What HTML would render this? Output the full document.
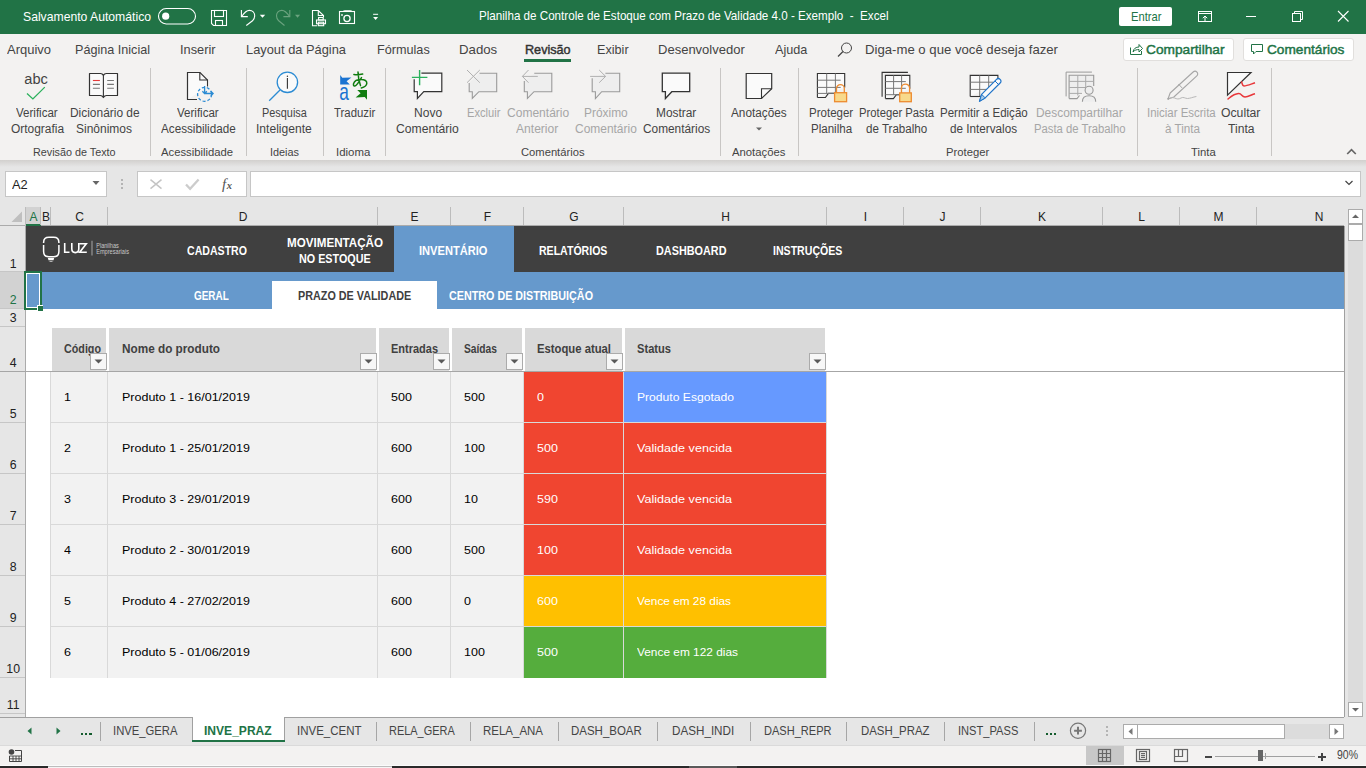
<!DOCTYPE html>
<html><head><meta charset="utf-8"><title>Excel</title>
<style>
html,body{margin:0;padding:0;width:1366px;height:768px;overflow:hidden;background:#f3f2f1;}
body{position:relative;font-family:"Liberation Sans",sans-serif;}
body>div{position:absolute;}
.t{position:absolute;white-space:nowrap;line-height:1;transform-origin:0 0;}
</style></head><body>
<div style="left:0px;top:0px;width:1366px;height:34px;background:#217346;"></div>
<div class="t" style="left:23px;top:10.00px;font-size:13px;color:#fff;transform:scaleX(0.9372);">Salvamento Automático</div>
<svg style="position:absolute;left:156px;top:6px;" width="42" height="22" viewBox="0 0 42 22"><rect x="2.5" y="2.5" width="37" height="15.5" rx="7.75" fill="none" stroke="#fff" stroke-width="1.1"/><circle cx="9.7" cy="10.2" r="3.6" fill="#fff"/></svg>
<svg style="position:absolute;left:209px;top:8px;" width="20" height="20" viewBox="0 0 20 20"><path d="M2.5 2.5H17.5V17.5H4.5L2.5 15.5Z" fill="none" stroke="#fff" stroke-width="1.1"/><rect x="5.5" y="2.5" width="9" height="6" fill="none" stroke="#fff" stroke-width="1.1"/><rect x="6.5" y="12.5" width="7" height="5" fill="none" stroke="#fff" stroke-width="1.1"/></svg>
<svg style="position:absolute;left:238px;top:8px;" width="30" height="20" viewBox="0 0 30 20"><path d="M3.4 1.9V8.6H9.8" fill="none" stroke="#fff" stroke-width="1.1"/><path d="M3.8 8.2C6 5 8.5 2.4 11.3 2.4C14.5 2.4 16.7 4.8 16.7 7.8C16.7 10 15.8 11.5 14.5 12.8L8.3 17.5" fill="none" stroke="#fff" stroke-width="1.1"/><path d="M21.8 6.8H27.2L24.5 9.8Z" fill="#fff"/></svg>
<svg style="position:absolute;left:273px;top:8px;" width="30" height="20" viewBox="0 0 30 20"><path d="M16.8 1.9V8.6H10.4" fill="none" stroke="#6ba37f" stroke-width="1.1"/><path d="M16.4 8.2C14.2 5 11.7 2.4 8.9 2.4C5.7 2.4 3.5 4.8 3.5 7.8C3.5 10 4.4 11.5 5.7 12.8L11.5 17.5" fill="none" stroke="#6ba37f" stroke-width="1.1"/><path d="M22 6.8H27.1L24.55 9.8Z" fill="#6ba37f"/></svg>
<svg style="position:absolute;left:306px;top:6px;" width="80" height="24" viewBox="0 0 80 24"><g fill="none" stroke="#fff" stroke-width="1.1"><path d="M11 19.7H6.5V4.5H12.3L17.5 9.5V11"/><path d="M12.3 4.5V9.5H17.5"/><rect x="12.6" y="11.5" width="4.6" height="2.5"/><rect x="10.5" y="14" width="9" height="3.7"/><rect x="12.3" y="16.2" width="5.4" height="3.5"/><rect x="33.5" y="5.5" width="15" height="12"/><path d="M37.4 5.5Q37.6 4.8 39 4.8H44.3Q45.5 4.8 45.7 5.5"/><circle cx="41" cy="12.5" r="3.1" stroke-width="1.3"/></g><rect x="35.2" y="8.2" width="1.6" height="1.6" fill="#fff"/><path d="M67.1 8.3H72.1" stroke="#fff" stroke-width="1"/><path d="M67.1 11.1H72.1L69.6 14Z" fill="#fff"/></svg>
<div class="t" style="left:479.4px;top:9.00px;font-size:13px;color:#fff;transform:scaleX(0.8943);">Planilha de Controle de Estoque com Prazo de Validade 4.0 - Exemplo&nbsp;&nbsp;-&nbsp;&nbsp;Excel</div>
<div style="left:1119px;top:7px;width:53px;height:19px;background:#fff;border-radius:2px;"></div>
<div class="t" style="left:1130.6px;top:10.00px;font-size:13px;color:#217346;transform:scaleX(0.8587);">Entrar</div>
<svg style="position:absolute;left:1196px;top:9px;" width="18" height="15" viewBox="0 0 18 15"><rect x="2.5" y="2.5" width="13" height="10" fill="none" stroke="#fff"/><path d="M2.5 4.5H15.5" stroke="#fff"/><path d="M9 12V7M6.8 9.2L9 7L11.2 9.2" fill="none" stroke="#fff"/></svg>
<div style="left:1246px;top:16px;width:10px;height:1px;background:#fff;"></div>
<svg style="position:absolute;left:1290px;top:9px;" width="15" height="15" viewBox="0 0 15 15"><rect x="2.5" y="4.5" width="8" height="8" fill="none" stroke="#fff"/><path d="M4.5 4.5V2.5H12.5V10.5H10.5" fill="none" stroke="#fff"/></svg>
<svg style="position:absolute;left:1336px;top:9px;" width="15" height="15" viewBox="0 0 15 15"><path d="M2 2L12.5 12.5M12.5 2L2 12.5" stroke="#fff" stroke-width="1.1"/></svg>
<div style="left:0px;top:34px;width:1366px;height:126px;background:#f3f2f1;"></div>
<div class="t" style="left:7px;top:43.00px;font-size:13px;color:#444;transform:scaleX(0.9982);">Arquivo</div>
<div class="t" style="left:75px;top:43.00px;font-size:13px;color:#444;transform:scaleX(0.9699);">Página Inicial</div>
<div class="t" style="left:180px;top:43.00px;font-size:13px;color:#444;transform:scaleX(0.9828);">Inserir</div>
<div class="t" style="left:246px;top:43.00px;font-size:13px;color:#444;transform:scaleX(0.9882);">Layout da Página</div>
<div class="t" style="left:377px;top:43.00px;font-size:13px;color:#444;transform:scaleX(0.9727);">Fórmulas</div>
<div class="t" style="left:458.8px;top:43.00px;font-size:13px;color:#444;transform:scaleX(1.0165);">Dados</div>
<div class="t" style="left:597.2px;top:43.00px;font-size:13px;color:#444;transform:scaleX(0.9721);">Exibir</div>
<div class="t" style="left:658px;top:43.00px;font-size:13px;color:#444;transform:scaleX(1.0009);">Desenvolvedor</div>
<div class="t" style="left:775px;top:43.00px;font-size:13px;color:#444;transform:scaleX(0.9714);">Ajuda</div>
<div class="t" style="left:524.5px;top:43.00px;font-size:13px;color:#333;transform:scaleX(0.9709);-webkit-text-stroke:0.45px #333;">Revisão</div>
<div style="left:524px;top:59px;width:47px;height:3px;background:#217346;"></div>
<svg style="position:absolute;left:836px;top:41px;" width="18" height="18" viewBox="0 0 18 18"><circle cx="10.5" cy="7" r="5" fill="none" stroke="#444" stroke-width="1"/><path d="M7 10.5L2 15.5" stroke="#444" stroke-width="1.2"/></svg>
<div class="t" style="left:864.5px;top:43.00px;font-size:13px;color:#444;transform:scaleX(1.0117);">Diga-me o que você deseja fazer</div>
<div style="left:1123px;top:38px;width:111px;height:23px;background:#fff;box-sizing:border-box;border:1px solid #e1dfdd;border-radius:3px;"></div>
<svg style="position:absolute;left:1128px;top:41px;" width="16" height="16" viewBox="0 0 16 16"><path d="M2.5 6.5V13.5H13.5V10" fill="none" stroke="#217346"/><path d="M5 11C5.5 7.5 8 6 11 6V3.5L14.5 7.5L11 11V8.5C9 8.5 6.5 9 5 11Z" fill="none" stroke="#217346" stroke-linejoin="round"/></svg>
<div class="t" style="left:1145.8px;top:43.00px;font-size:13px;color:#217346;transform:scaleX(1.0549);-webkit-text-stroke:0.45px #217346;">Compartilhar</div>
<div style="left:1243px;top:38px;width:111px;height:23px;background:#fff;box-sizing:border-box;border:1px solid #e1dfdd;border-radius:3px;"></div>
<svg style="position:absolute;left:1249px;top:41px;" width="16" height="16" viewBox="0 0 16 16"><path d="M2.5 3.5H13.5V10.5H7L4.5 13V10.5H2.5Z" fill="none" stroke="#217346" stroke-linejoin="round"/></svg>
<div class="t" style="left:1266.6px;top:43.00px;font-size:13px;color:#217346;transform:scaleX(1.0502);-webkit-text-stroke:0.45px #217346;">Comentários</div>
<div class="t" style="left:16.3px;top:106.84px;font-size:12px;color:#444;transform:scaleX(0.9619);">Verificar</div>
<div class="t" style="left:10.7px;top:122.84px;font-size:12px;color:#444;transform:scaleX(0.9952);">Ortografia</div>
<div class="t" style="left:69.7px;top:106.84px;font-size:12px;color:#444;transform:scaleX(0.9937);">Dicionário de</div>
<div class="t" style="left:76.2px;top:122.84px;font-size:12px;color:#444;transform:scaleX(0.9995);">Sinônimos</div>
<div class="t" style="left:32.6px;top:146.69px;font-size:11px;color:#444;transform:scaleX(0.9812);">Revisão de Texto</div>
<div class="t" style="left:177.2px;top:106.84px;font-size:12px;color:#444;transform:scaleX(0.9619);">Verificar</div>
<div class="t" style="left:160.5px;top:122.84px;font-size:12px;color:#444;transform:scaleX(0.9737);">Acessibilidade</div>
<div class="t" style="left:161.4px;top:146.69px;font-size:11px;color:#444;transform:scaleX(1.0253);">Acessibilidade</div>
<div class="t" style="left:261.6px;top:106.84px;font-size:12px;color:#444;transform:scaleX(0.9075);">Pesquisa</div>
<div class="t" style="left:256.3px;top:122.84px;font-size:12px;color:#444;transform:scaleX(1.0058);">Inteligente</div>
<div class="t" style="left:269.5px;top:146.69px;font-size:11px;color:#444;transform:scaleX(0.9880);">Ideias</div>
<div class="t" style="left:333.7px;top:106.84px;font-size:12px;color:#444;transform:scaleX(0.9480);">Traduzir</div>
<div class="t" style="left:336.3px;top:146.69px;font-size:11px;color:#444;transform:scaleX(1.0389);">Idioma</div>
<div class="t" style="left:413.6px;top:106.84px;font-size:12px;color:#444;transform:scaleX(1.0031);">Novo</div>
<div class="t" style="left:396.2px;top:122.84px;font-size:12px;color:#444;transform:scaleX(1.0124);">Comentário</div>
<div class="t" style="left:466.6px;top:106.84px;font-size:12px;color:#a6a6a6;transform:scaleX(0.9276);">Excluir</div>
<div class="t" style="left:506.5px;top:106.84px;font-size:12px;color:#a6a6a6;transform:scaleX(1.0027);">Comentário</div>
<div class="t" style="left:516.4px;top:122.84px;font-size:12px;color:#a6a6a6;transform:scaleX(1.0067);">Anterior</div>
<div class="t" style="left:584px;top:106.84px;font-size:12px;color:#a6a6a6;transform:scaleX(0.9929);">Próximo</div>
<div class="t" style="left:574.6px;top:122.84px;font-size:12px;color:#a6a6a6;transform:scaleX(0.9963);">Comentário</div>
<div class="t" style="left:656.3px;top:106.84px;font-size:12px;color:#444;transform:scaleX(0.9909);">Mostrar</div>
<div class="t" style="left:642.6px;top:122.84px;font-size:12px;color:#444;transform:scaleX(0.9878);">Comentários</div>
<div class="t" style="left:520.6px;top:146.69px;font-size:11px;color:#444;transform:scaleX(1.0183);">Comentários</div>
<div class="t" style="left:731.3px;top:106.84px;font-size:12px;color:#444;transform:scaleX(0.9822);">Anotações</div>
<svg style="position:absolute;left:755px;top:126px;" width="8" height="6" viewBox="0 0 8 6"><path d="M1 1.5h6l-3 3z" fill="#666"/></svg>
<div class="t" style="left:732.1px;top:146.69px;font-size:11px;color:#444;transform:scaleX(1.0273);">Anotações</div>
<div class="t" style="left:808.5px;top:106.84px;font-size:12px;color:#444;transform:scaleX(0.9603);">Proteger</div>
<div class="t" style="left:810.6px;top:122.84px;font-size:12px;color:#444;transform:scaleX(0.9625);">Planilha</div>
<div class="t" style="left:858.5px;top:106.84px;font-size:12px;color:#444;transform:scaleX(0.9382);">Proteger Pasta</div>
<div class="t" style="left:865.6px;top:122.84px;font-size:12px;color:#444;transform:scaleX(0.9656);">de Trabalho</div>
<div class="t" style="left:939.6px;top:106.84px;font-size:12px;color:#444;transform:scaleX(0.9598);">Permitir a Edição</div>
<div class="t" style="left:949.8px;top:122.84px;font-size:12px;color:#444;transform:scaleX(0.9751);">de Intervalos</div>
<div class="t" style="left:1036.3px;top:106.84px;font-size:12px;color:#a6a6a6;transform:scaleX(0.9924);">Descompartilhar</div>
<div class="t" style="left:1033.7px;top:122.84px;font-size:12px;color:#a6a6a6;transform:scaleX(0.9404);">Pasta de Trabalho</div>
<div class="t" style="left:945.5px;top:146.69px;font-size:11px;color:#444;transform:scaleX(1.0239);">Proteger</div>
<div class="t" style="left:1147px;top:106.84px;font-size:12px;color:#a6a6a6;transform:scaleX(0.9539);">Iniciar Escrita</div>
<div class="t" style="left:1164.6px;top:122.84px;font-size:12px;color:#a6a6a6;transform:scaleX(0.9743);">à Tinta</div>
<div class="t" style="left:1221px;top:106.84px;font-size:12px;color:#444;transform:scaleX(1.0187);">Ocultar</div>
<div class="t" style="left:1227.5px;top:122.84px;font-size:12px;color:#444;transform:scaleX(1.0102);">Tinta</div>
<div class="t" style="left:1191px;top:146.69px;font-size:11px;color:#444;transform:scaleX(1.0272);">Tinta</div>
<div style="left:150px;top:68px;width:1px;height:88px;background:#c8c6c4;"></div>
<div style="left:246px;top:68px;width:1px;height:88px;background:#c8c6c4;"></div>
<div style="left:323px;top:68px;width:1px;height:88px;background:#c8c6c4;"></div>
<div style="left:385px;top:68px;width:1px;height:88px;background:#c8c6c4;"></div>
<div style="left:720px;top:68px;width:1px;height:88px;background:#c8c6c4;"></div>
<div style="left:798px;top:68px;width:1px;height:88px;background:#c8c6c4;"></div>
<div style="left:1137px;top:68px;width:1px;height:88px;background:#c8c6c4;"></div>
<div style="left:1271px;top:68px;width:1px;height:88px;background:#c8c6c4;"></div>
<svg style="position:absolute;left:1345px;top:147px;" width="13" height="9" viewBox="0 0 13 9"><path d="M2.2 7L6.5 2.7L10.8 7" fill="none" stroke="#666" stroke-width="1.7"/></svg>
<svg style="position:absolute;left:0px;top:60px;" width="160" height="45" viewBox="0 0 160 45"><text x="24.3" y="24" font-family="Liberation Sans" font-size="15.5" fill="#444" textLength="23.5" lengthAdjust="spacingAndGlyphs">abc</text><path d="M27 33.4L32.9 38.9L44.8 27.1" fill="none" stroke="#2bb15c" stroke-width="1.3"/><path d="M89.5 13.5H100.5Q102.5 13.5 103.4 15.5Q104.3 13.5 106.3 13.5H117.5V35.5H106.5Q104.5 35.5 103.4 37.5Q102.3 35.5 100.3 35.5H89.5Z" fill="#fafafa" stroke="#333" stroke-width="1.2" stroke-linejoin="round"/><path d="M103.4 15.5V37" stroke="#333" stroke-width="1.1"/><path d="M92.9 20.5H99.9" stroke="#e43b3b" stroke-width="1.1"/><path d="M92.9 24.4H99.9M92.9 28.3H99.9M107.2 20.5H113.9M107.2 24.4H113.9M107.2 28.3H113.9" stroke="#777" stroke-width="1.1"/></svg>
<svg style="position:absolute;left:180px;top:66px;" width="40" height="40" viewBox="0 0 40 40"><path d="M7.5 33.5V6.5H20L27.5 14V20.5" fill="#fafafa" stroke="#333" stroke-width="1.1"/><path d="M7.5 6.5V33.5H17" fill="none" stroke="#333" stroke-width="1.1"/><path d="M19.8 6.5V14H27.5" fill="none" stroke="#333" stroke-width="1.1"/><circle cx="24.6" cy="28.3" r="7" fill="none" stroke="#2b8bd3" stroke-width="1.3" stroke-dasharray="3 2"/><path d="M24.6 20V27.5M22.4 25.3L24.6 27.6L26.8 25.3M24.6 27.5H33M30.8 25.3L33.1 27.5L30.8 29.7" fill="none" stroke="#2b8bd3" stroke-width="1.3"/></svg>
<svg style="position:absolute;left:260px;top:66px;" width="40" height="40" viewBox="0 0 40 40"><circle cx="27.4" cy="16.3" r="10.2" fill="#fafafa" stroke="#2b8bd3" stroke-width="1.3"/><path d="M20 24L9.2 34.7" stroke="#2b8bd3" stroke-width="1.3"/><path d="M27.4 12V22.8" stroke="#333" stroke-width="1.1"/><circle cx="27.4" cy="10.2" r="0.7" fill="#333"/></svg>
<svg style="position:absolute;left:336px;top:70px;" width="34" height="34" viewBox="0 0 34 34"><path d="M4.2 5L6.3 7.7L15.4 7.5L10.6 11.3L13.8 14.6H4.2Z" fill="#1a73d1"/><text x="0" y="0" transform="translate(3.3 29.8) scale(0.72 1)" font-family="Liberation Sans" font-size="24" fill="#1a73d1">a</text><path d="M17.9 4.6Q22 5.2 26.7 4.1M22 2Q22.3 10 24.5 15.6M25.5 7.6Q21 15.5 18.8 16Q17 16.3 17.6 13.5Q19 9.6 25 9.6Q30.9 9.6 30.8 13.2Q30.6 16.6 25.3 17.9" fill="none" stroke="#107c10" stroke-width="1.5" stroke-linecap="round"/><path d="M21.25 20H31V29.8L28.75 27.1L19.6 27.5L24.6 23.3Z" fill="#107c10"/></svg>
<svg style="position:absolute;left:405px;top:66px;" width="40" height="40" viewBox="0 0 40 40"><path d="M9.2 13.2V25.7H12.4V32.5L18.8 25.7H36.8V7.2H16.4" fill="#fafafa" stroke="#333" stroke-width="1.2"/><path d="M14.6 4V19.2M6.9 11.4H22.4" stroke="#2bb15c" stroke-width="1.4"/></svg>
<svg style="position:absolute;left:460px;top:66px;" width="40" height="40" viewBox="0 0 40 40"><path d="M9.2 17.1V25.7H12.3V32.5L18.9 25.7H36.7V7.2H19.5" fill="#eeeeee" stroke="#9a9a9a" stroke-width="1.1"/><path d="M7 4L19.8 16.7M19.8 4L7 16.7" stroke="#b0b0b0" stroke-width="1"/></svg>
<svg style="position:absolute;left:520px;top:66px;" width="40" height="40" viewBox="0 0 40 40"><path d="M4.3 15.1V25.7H7.4V32.5L14 25.7H31.8V7.2H14.3" fill="#eeeeee" stroke="#9a9a9a" stroke-width="1.1"/><path d="M2.4 10.4H17.8M8.5 4L2.4 10.4L8.5 16.7" fill="none" stroke="#b0b0b0" stroke-width="1"/></svg>
<svg style="position:absolute;left:585px;top:66px;" width="40" height="40" viewBox="0 0 40 40"><path d="M7.2 12.3V25.7H10.4V32.5L16.7 25.7H34.7V7.2H20.4" fill="#eeeeee" stroke="#9a9a9a" stroke-width="1.1"/><path d="M5.1 10.4H20.6M14.2 4L20.6 10.4L14.2 16.7" fill="none" stroke="#b0b0b0" stroke-width="1"/></svg>
<svg style="position:absolute;left:655px;top:66px;" width="40" height="40" viewBox="0 0 40 40"><path d="M7.3 7.2H34.7V25.7H16.8L10.4 32.5V25.7H7.3Z" fill="#fafafa" stroke="#333" stroke-width="1.3" stroke-linejoin="miter"/></svg>
<svg style="position:absolute;left:740px;top:66px;" width="40" height="40" viewBox="0 0 40 40"><path d="M6.2 7.5H31.7V22.7L21.5 32.5H6.2Z" fill="#fafafa" stroke="#333" stroke-width="1.2"/><path d="M21.5 32.5V22.7H31.7" fill="none" stroke="#333" stroke-width="1.1"/></svg>
<svg style="position:absolute;left:800px;top:66px;" width="60" height="40" viewBox="0 0 60 40"><path d="M17.4 31.5V7.5H44.7V21.4" fill="#fafafa" stroke="#333" stroke-width="1.1"/><path d="M17.4 31.5H25.4L28.4 27.4H38.7" fill="none" stroke="#333" stroke-width="1.1"/><path d="M26.7 7.5V27.4" stroke="#777" stroke-width="1"/><path d="M35.4 7.5V27.4" stroke="#777" stroke-width="1"/><path d="M17.4 14.2H40.7" stroke="#777" stroke-width="1"/><path d="M17.4 21.4H40.7" stroke="#777" stroke-width="1"/><path d="M17.4 27.4H40.7" stroke="#777" stroke-width="1"/><path d="M36.5 26.7V22.5A3.8999999999999986 3.8999999999999986 0 0 1 44.3 22.5V26.7" fill="none" stroke="#ed8b30" stroke-width="1.3"/><rect x="34.6" y="26.7" width="12" height="9" fill="#f8d98b" stroke="#ed8b30" stroke-width="1.3"/></svg>
<svg style="position:absolute;left:870px;top:66px;" width="60" height="40" viewBox="0 0 60 40"><path d="M12.1 30.7V6.4H37.9" fill="none" stroke="#333" stroke-width="1.1"/><path d="M15.4 32.6V9.4H39.8V22.7" fill="#fafafa" stroke="#333" stroke-width="1.1"/><path d="M15.4 32.6H23.4L26.4 28.7H33.8" fill="none" stroke="#333" stroke-width="1.1"/><path d="M23.6 9.4V28.7" stroke="#777" stroke-width="1"/><path d="M31.6 9.4V28.7" stroke="#777" stroke-width="1"/><path d="M15.4 15.6H35.8" stroke="#777" stroke-width="1"/><path d="M15.4 22.3H35.8" stroke="#777" stroke-width="1"/><path d="M15.4 28.7H35.8" stroke="#777" stroke-width="1"/><path d="M31.4 26.9V22.2A4.100000000000001 4.100000000000001 0 0 1 39.6 22.2V26.9" fill="none" stroke="#ed8b30" stroke-width="1.3"/><rect x="29.7" y="26.9" width="11.6" height="8.8" fill="#f8d98b" stroke="#ed8b30" stroke-width="1.3"/></svg>
<svg style="position:absolute;left:960px;top:66px;" width="50" height="40" viewBox="0 0 50 40"><path d="M10.2 30.5V9.4H37.9V16" fill="#fafafa" stroke="#333" stroke-width="1.1"/><path d="M10.2 30.5H23" fill="none" stroke="#333" stroke-width="1.1"/><path d="M19.7 9.4V30M28.7 9.4V25M10.2 16.2H33M10.2 23.4H27" stroke="#777" stroke-width="1"/><path d="M19.5 35.3L21.6 28.3L36.5 13.4Q38.3 11.6 40.1 13.4Q41.9 15.2 40.1 17L25.2 31.9Z" fill="#fafafa" stroke="#1e73c8" stroke-width="1.2" stroke-linejoin="round"/><path d="M19.5 35.3L21.6 28.3L25.2 31.9Z" fill="#a7cbea" stroke="#1e73c8" stroke-width="1"/><path d="M35 15L38.5 18.5" stroke="#1e73c8" stroke-width="1"/></svg>
<svg style="position:absolute;left:1060px;top:66px;" width="40" height="40" viewBox="0 0 40 40"><path d="M6.1 30.4V6.1H31.9" fill="none" stroke="#999" stroke-width="1"/><path d="M9.1 32.6V9.2H33.7V20" fill="#eeeeee" stroke="#999" stroke-width="1.1"/><path d="M9.1 32.6H17L19.5 29.5" fill="none" stroke="#999" stroke-width="1.1"/><path d="M17.8 9.2V29.5M25.7 9.2V22M9.1 15.4H33.7M9.1 21.5H26M9.1 27.4H22" stroke="#aaa" stroke-width="1"/><circle cx="29.1" cy="24.3" r="4" fill="#eee" stroke="#999" stroke-width="1.1"/><path d="M22.4 35.7Q22.4 29.8 29.1 29.8Q35.7 29.8 35.7 35.7" fill="#eee" stroke="#999" stroke-width="1.1"/></svg>
<svg style="position:absolute;left:1160px;top:66px;" width="40" height="40" viewBox="0 0 40 40"><path d="M8 33L10.15 27.03L33.15 6.03A2.7 2.7 0 0 1 36.85 9.97L13.85 30.97Z" fill="#f3f2f1" stroke="#a6a6a6" stroke-width="1.1" stroke-linejoin="round"/><path d="M18.45 18.03L22.15 21.97" stroke="#a6a6a6" stroke-width="1"/><path d="M8 33C10 32 12 31 14.5 32C17 33 18.5 33.5 21 32C23.5 30.5 25 32.5 27.5 32.5C30 32.5 33 31 36.4 30.5" fill="none" stroke="#b8b8b8" stroke-width="1"/><circle cx="8.3" cy="32.7" r="1" fill="#a6a6a6"/></svg>
<svg style="position:absolute;left:1220px;top:66px;" width="40" height="40" viewBox="0 0 40 40"><path d="M7.5 6.5H31L7.5 29.2Z" fill="#fafafa" stroke="#333" stroke-width="1.2"/><path d="M21.3 15.6C22.5 17 22 20 24 20C26.5 20 30 18.5 35 16.8M7.5 33.3C10 31.5 13.5 28 18.5 27.6C22 27.4 21.5 31 25 31C28.5 31 31.5 28.5 35 27.7" fill="none" stroke="#e8373a" stroke-width="1.5"/></svg>
<div style="left:0px;top:160px;width:1366px;height:66px;background:#e6e6e6;"></div>
<div style="left:0;top:160px;width:1366px;height:7px;background:linear-gradient(#d2d0ce,#e6e6e6);"></div>
<div style="left:5px;top:171px;width:102px;height:26px;background:#fff;box-sizing:border-box;border:1px solid #c6c6c6;"></div>
<div class="t" style="left:12.3px;top:178.84px;font-size:12px;color:#222;transform:scaleX(1.0696);">A2</div>
<svg style="position:absolute;left:90px;top:178px;" width="12" height="10" viewBox="0 0 12 10"><path d="M2.5 3h7l-3.5 4z" fill="#666"/></svg>
<div style="left:121px;top:179px;width:2px;height:2px;background:#b4b4b4;"></div>
<div style="left:121px;top:183px;width:2px;height:2px;background:#b4b4b4;"></div>
<div style="left:121px;top:187px;width:2px;height:2px;background:#b4b4b4;"></div>
<div style="left:137px;top:171px;width:110px;height:26px;background:#fff;box-sizing:border-box;border:1px solid #c6c6c6;"></div>
<svg style="position:absolute;left:148px;top:177px;" width="16" height="16" viewBox="0 0 16 16"><path d="M2.5 2.7L13.5 11.6M13.5 2.7L2.5 11.6" stroke="#c4c4c4" stroke-width="1.5"/></svg>
<svg style="position:absolute;left:184px;top:177px;" width="17" height="16" viewBox="0 0 17 16"><path d="M2 7.5L6.1 11.8L14.6 2.5" fill="none" stroke="#cccccc" stroke-width="2.3"/></svg>
<svg style="position:absolute;left:218px;top:174px;" width="20" height="20" viewBox="0 0 20 20"><text x="4" y="15" font-family="Liberation Serif" font-style="italic" font-size="15" fill="#555">f</text><text x="8.7" y="14.5" font-family="Liberation Serif" font-style="italic" font-weight="bold" font-size="10.5" fill="#555">x</text></svg>
<div style="left:250px;top:171px;width:1111px;height:26px;background:#fff;box-sizing:border-box;border:1px solid #c6c6c6;"></div>
<svg style="position:absolute;left:1343px;top:178px;" width="12" height="10" viewBox="0 0 12 10"><path d="M2.5 3L6 6.5L9.5 3" fill="none" stroke="#444" stroke-width="1.2"/></svg>
<div style="left:0px;top:225px;width:1344px;height:1px;background:#ababab;"></div>
<svg style="position:absolute;left:10px;top:210px;" width="14" height="14" viewBox="0 0 14 14"><path d="M12 1.5V12H1.5Z" fill="#bfbfbf"/></svg>
<div style="left:26px;top:207px;width:14px;height:18px;background:#d2d2d2;"></div>
<div style="left:25px;top:207px;width:1px;height:19px;background:#bcbcbc;"></div>
<div style="left:26px;top:224px;width:15px;height:2px;background:#217346;"></div>
<div style="left:40px;top:207px;width:1px;height:18px;background:#bcbcbc;"></div>
<div class="t" style="left:29.497812500000002px;top:210.84px;font-size:12px;color:#217346;">A</div>
<div style="left:50px;top:207px;width:1px;height:18px;background:#bcbcbc;"></div>
<div class="t" style="left:41.9978125px;top:210.84px;font-size:12px;color:#222;">B</div>
<div style="left:107px;top:207px;width:1px;height:18px;background:#bcbcbc;"></div>
<div class="t" style="left:75.166875px;top:210.84px;font-size:12px;color:#222;">C</div>
<div style="left:377px;top:207px;width:1px;height:18px;background:#bcbcbc;"></div>
<div class="t" style="left:238.666875px;top:210.84px;font-size:12px;color:#222;">D</div>
<div style="left:450px;top:207px;width:1px;height:18px;background:#bcbcbc;"></div>
<div class="t" style="left:410.4978125px;top:210.84px;font-size:12px;color:#222;">E</div>
<div style="left:523px;top:207px;width:1px;height:18px;background:#bcbcbc;"></div>
<div class="t" style="left:483.83484375px;top:210.84px;font-size:12px;color:#222;">F</div>
<div style="left:623px;top:207px;width:1px;height:18px;background:#bcbcbc;"></div>
<div class="t" style="left:569.333125px;top:210.84px;font-size:12px;color:#222;">G</div>
<div style="left:826px;top:207px;width:1px;height:18px;background:#bcbcbc;"></div>
<div class="t" style="left:721.166875px;top:210.84px;font-size:12px;color:#222;">H</div>
<div style="left:903px;top:207px;width:1px;height:18px;background:#bcbcbc;"></div>
<div class="t" style="left:863.833125px;top:210.84px;font-size:12px;color:#222;">I</div>
<div style="left:980px;top:207px;width:1px;height:18px;background:#bcbcbc;"></div>
<div class="t" style="left:939.5px;top:210.84px;font-size:12px;color:#222;">J</div>
<div style="left:1102px;top:207px;width:1px;height:18px;background:#bcbcbc;"></div>
<div class="t" style="left:1037.9978125px;top:210.84px;font-size:12px;color:#222;">K</div>
<div style="left:1179px;top:207px;width:1px;height:18px;background:#bcbcbc;"></div>
<div class="t" style="left:1138.16296875px;top:210.84px;font-size:12px;color:#222;">L</div>
<div style="left:1256px;top:207px;width:1px;height:18px;background:#bcbcbc;"></div>
<div class="t" style="left:1213.50171875px;top:210.84px;font-size:12px;color:#222;">M</div>
<div class="t" style="left:1314.7668749999998px;top:210.84px;font-size:12px;color:#222;">N</div>
<div style="left:0px;top:226px;width:25px;height:491px;background:#e6e6e6;"></div>
<div style="left:0px;top:272px;width:25px;height:37px;background:#d2d2d2;"></div>
<div style="left:25px;top:226px;width:1px;height:491px;background:#ababab;"></div>
<div style="left:0px;top:271px;width:25px;height:1px;background:#c6c6c6;"></div>
<div class="t" style="left:9.662968750000001px;top:257.59px;font-size:12.3px;color:#222;">1</div>
<div style="left:0px;top:308px;width:25px;height:1px;background:#c6c6c6;"></div>
<div class="t" style="left:9.662968750000001px;top:293.59px;font-size:12.3px;color:#217346;">2</div>
<div style="left:0px;top:326px;width:25px;height:1px;background:#c6c6c6;"></div>
<div class="t" style="left:9.662968750000001px;top:311.59px;font-size:12.3px;color:#222;">3</div>
<div style="left:0px;top:371px;width:25px;height:1px;background:#c6c6c6;"></div>
<div class="t" style="left:9.662968750000001px;top:356.59px;font-size:12.3px;color:#222;">4</div>
<div style="left:0px;top:422px;width:25px;height:1px;background:#c6c6c6;"></div>
<div class="t" style="left:9.662968750000001px;top:407.59px;font-size:12.3px;color:#222;">5</div>
<div style="left:0px;top:473px;width:25px;height:1px;background:#c6c6c6;"></div>
<div class="t" style="left:9.662968750000001px;top:458.59px;font-size:12.3px;color:#222;">6</div>
<div style="left:0px;top:524px;width:25px;height:1px;background:#c6c6c6;"></div>
<div class="t" style="left:9.662968750000001px;top:509.59px;font-size:12.3px;color:#222;">7</div>
<div style="left:0px;top:575px;width:25px;height:1px;background:#c6c6c6;"></div>
<div class="t" style="left:9.662968750000001px;top:560.59px;font-size:12.3px;color:#222;">8</div>
<div style="left:0px;top:626px;width:25px;height:1px;background:#c6c6c6;"></div>
<div class="t" style="left:9.662968750000001px;top:611.59px;font-size:12.3px;color:#222;">9</div>
<div style="left:0px;top:677px;width:25px;height:1px;background:#c6c6c6;"></div>
<div class="t" style="left:6.3259375px;top:662.59px;font-size:12.3px;color:#222;">10</div>
<div style="left:0px;top:713px;width:25px;height:1px;background:#c6c6c6;"></div>
<div class="t" style="left:6.77125px;top:698.59px;font-size:12.3px;color:#222;">11</div>
<div style="left:26px;top:226px;width:1318px;height:491px;background:#fff;"></div>
<div style="left:1344px;top:207px;width:22px;height:510px;background:#e6e6e6;"></div>
<div style="left:1348px;top:240px;width:15px;height:477px;background:#dcdcdc;"></div>
<div style="left:1348px;top:209px;width:15px;height:15px;background:#fff;box-sizing:border-box;border:1px solid #ababab;"></div>
<svg style="position:absolute;left:1348px;top:209px;" width="15" height="15" viewBox="0 0 15 15"><path d="M4 9h7l-3.5-3.5z" fill="#666"/></svg>
<div style="left:1348px;top:224px;width:15px;height:17px;background:#fff;box-sizing:border-box;border:1px solid #ababab;"></div>
<div style="left:1348px;top:702px;width:15px;height:15px;background:#fff;box-sizing:border-box;border:1px solid #ababab;"></div>
<svg style="position:absolute;left:1348px;top:702px;" width="15" height="15" viewBox="0 0 15 15"><path d="M4 6h7l-3.5 3.5z" fill="#666"/></svg>
<div style="left:26px;top:226px;width:1318px;height:46px;background:#404040;"></div>
<div style="left:394px;top:226px;width:120px;height:46px;background:#6699cc;"></div>
<div class="t" style="left:187.4px;top:244.84px;font-size:12px;color:#fff;font-weight:bold;transform:scaleX(0.8824);">CADASTRO</div>
<div class="t" style="left:287.3px;top:236.84px;font-size:12px;color:#fff;font-weight:bold;transform:scaleX(0.9686);">MOVIMENTAÇÃO</div>
<div class="t" style="left:299.4px;top:252.84px;font-size:12px;color:#fff;font-weight:bold;transform:scaleX(0.8986);">NO ESTOQUE</div>
<div class="t" style="left:419.3px;top:244.84px;font-size:12px;color:#fff;font-weight:bold;transform:scaleX(0.9243);">INVENTÁRIO</div>
<div class="t" style="left:538.7px;top:244.84px;font-size:12px;color:#fff;font-weight:bold;transform:scaleX(0.8794);">RELATÓRIOS</div>
<div class="t" style="left:655.6px;top:244.84px;font-size:12px;color:#fff;font-weight:bold;transform:scaleX(0.9038);">DASHBOARD</div>
<div class="t" style="left:773.4px;top:244.84px;font-size:12px;color:#fff;font-weight:bold;transform:scaleX(0.8821);">INSTRUÇÕES</div>
<svg style="position:absolute;left:38px;top:232px;" width="100" height="34" viewBox="0 0 100 34"><path d="M5.6 11V10.5C5.6 7.5 7.5 5.3 11 5.3H15.7C19 5.3 20.9 7.5 20.9 10.5V11M5.6 13V19.5C5.6 22.8 7.5 24.8 11 24.8H15.7C19 24.8 20.9 22.8 20.9 19.5V13" fill="none" stroke="#fff" stroke-width="1.5"/><path d="M9.8 26H16.2L15.5 28.3H10.5Z" fill="#fff"/><path d="M10.5 29.2H15.5L13 30Z" fill="#fff"/><path d="M26.7 11.1V20.3H31.5M33.8 11.1V16.8Q33.8 20.6 37.3 20.6Q40.8 20.6 40.8 16.8V11.1M41.7 11.7H48.3L41.7 20.3H48.8" fill="none" stroke="#fff" stroke-width="1.6"/><path d="M54 8.8V23.5" stroke="#8a8a8a" stroke-width="1.4"/><text x="58.2" y="16" font-family="Liberation Sans" font-size="6.3" fill="#c8c8c8" textLength="22.6" lengthAdjust="spacingAndGlyphs">Planilhas</text><text x="58.2" y="22" font-family="Liberation Sans" font-size="6.3" fill="#c8c8c8" textLength="32.8" lengthAdjust="spacingAndGlyphs">Empresariais</text></svg>
<div style="left:26px;top:272px;width:1318px;height:37px;background:#6699cc;"></div>
<div style="left:272px;top:281px;width:165px;height:28px;background:#fff;"></div>
<div class="t" style="left:193.6px;top:289.84px;font-size:12px;color:#fff;font-weight:bold;transform:scaleX(0.8286);">GERAL</div>
<div class="t" style="left:297.6px;top:289.84px;font-size:12px;color:#404040;font-weight:bold;transform:scaleX(0.8999);">PRAZO DE VALIDADE</div>
<div class="t" style="left:448.8px;top:289.84px;font-size:12px;color:#fff;font-weight:bold;transform:scaleX(0.8962);">CENTRO DE DISTRIBUIÇÃO</div>
<div style="left:24px;top:271px;width:18px;height:39px;box-sizing:border-box;border:2px solid #217346;"></div>
<div style="left:26px;top:273px;width:14px;height:35px;box-sizing:border-box;border:1px solid #fff;"></div>
<div style="left:37px;top:305px;width:6px;height:6px;background:#217346;box-sizing:border-box;border:1px solid #fff;"></div>
<div style="left:38px;top:306px;width:5px;height:5px;background:#217346;"></div>
<div style="left:52px;top:328px;width:54px;height:43px;background:#d9d9d9;"></div>
<div class="t" style="left:64.2px;top:343.42px;font-size:12.5px;color:#404040;font-weight:bold;transform:scaleX(0.8596);">Código</div>
<div style="left:109px;top:328px;width:267px;height:43px;background:#d9d9d9;"></div>
<div class="t" style="left:121.5px;top:343.42px;font-size:12.5px;color:#404040;font-weight:bold;transform:scaleX(0.9409);">Nome do produto</div>
<div style="left:379px;top:328px;width:70px;height:43px;background:#d9d9d9;"></div>
<div class="t" style="left:391.25px;top:343.42px;font-size:12.5px;color:#404040;font-weight:bold;transform:scaleX(0.8786);">Entradas</div>
<div style="left:452px;top:328px;width:70px;height:43px;background:#d9d9d9;"></div>
<div class="t" style="left:463.9px;top:343.42px;font-size:12.5px;color:#404040;font-weight:bold;transform:scaleX(0.8188);">Saídas</div>
<div style="left:525px;top:328px;width:97px;height:43px;background:#d9d9d9;"></div>
<div class="t" style="left:537px;top:343.42px;font-size:12.5px;color:#404040;font-weight:bold;transform:scaleX(0.9029);">Estoque atual</div>
<div style="left:625px;top:328px;width:200px;height:43px;background:#d9d9d9;"></div>
<div class="t" style="left:637.2px;top:343.42px;font-size:12.5px;color:#404040;font-weight:bold;transform:scaleX(0.8900);">Status</div>
<div style="left:0px;top:371px;width:1344px;height:1px;background:#a6a6a6;"></div>
<svg style="position:absolute;left:90px;top:353px;" width="17" height="17" viewBox="0 0 17 17"><rect x="0.5" y="0.5" width="16" height="16" fill="#f7f7f7" stroke="#ababab"/><path d="M4.5 6.5h8l-4 4z" fill="#595959"/></svg>
<svg style="position:absolute;left:360px;top:353px;" width="17" height="17" viewBox="0 0 17 17"><rect x="0.5" y="0.5" width="16" height="16" fill="#f7f7f7" stroke="#ababab"/><path d="M4.5 6.5h8l-4 4z" fill="#595959"/></svg>
<svg style="position:absolute;left:433px;top:353px;" width="17" height="17" viewBox="0 0 17 17"><rect x="0.5" y="0.5" width="16" height="16" fill="#f7f7f7" stroke="#ababab"/><path d="M4.5 6.5h8l-4 4z" fill="#595959"/></svg>
<svg style="position:absolute;left:506px;top:353px;" width="17" height="17" viewBox="0 0 17 17"><rect x="0.5" y="0.5" width="16" height="16" fill="#f7f7f7" stroke="#ababab"/><path d="M4.5 6.5h8l-4 4z" fill="#595959"/></svg>
<svg style="position:absolute;left:606px;top:353px;" width="17" height="17" viewBox="0 0 17 17"><rect x="0.5" y="0.5" width="16" height="16" fill="#f7f7f7" stroke="#ababab"/><path d="M4.5 6.5h8l-4 4z" fill="#595959"/></svg>
<svg style="position:absolute;left:809px;top:353px;" width="17" height="17" viewBox="0 0 17 17"><rect x="0.5" y="0.5" width="16" height="16" fill="#f7f7f7" stroke="#ababab"/><path d="M4.5 6.5h8l-4 4z" fill="#595959"/></svg>
<div style="left:51px;top:372px;width:472px;height:306px;background:#f2f2f2;"></div>
<div style="left:524px;top:372px;width:99px;height:51px;background:#f04530;"></div>
<div style="left:624px;top:372px;width:202px;height:51px;background:#6699ff;"></div>
<div class="t" style="left:64px;top:392.27px;font-size:11.5px;color:#000;transform:scaleX(1.0870);">1</div>
<div class="t" style="left:121.5px;top:392.27px;font-size:11.5px;color:#000;transform:scaleX(1.0870);">Produto 1 - 16/01/2019</div>
<div class="t" style="left:391.25px;top:392.27px;font-size:11.5px;color:#000;transform:scaleX(1.0870);">500</div>
<div class="t" style="left:463.9px;top:392.27px;font-size:11.5px;color:#000;transform:scaleX(1.0870);">500</div>
<div class="t" style="left:537px;top:392.27px;font-size:11.5px;color:#fff;transform:scaleX(1.0870);">0</div>
<div class="t" style="left:637px;top:392.27px;font-size:11.5px;color:#fff;transform:scaleX(1.0535);">Produto Esgotado</div>
<div style="left:524px;top:423px;width:99px;height:51px;background:#f04530;"></div>
<div style="left:624px;top:423px;width:202px;height:51px;background:#f04530;"></div>
<div class="t" style="left:64px;top:443.27px;font-size:11.5px;color:#000;transform:scaleX(1.0870);">2</div>
<div class="t" style="left:121.5px;top:443.27px;font-size:11.5px;color:#000;transform:scaleX(1.0870);">Produto 1 - 25/01/2019</div>
<div class="t" style="left:391.25px;top:443.27px;font-size:11.5px;color:#000;transform:scaleX(1.0870);">600</div>
<div class="t" style="left:463.9px;top:443.27px;font-size:11.5px;color:#000;transform:scaleX(1.0870);">100</div>
<div class="t" style="left:537px;top:443.27px;font-size:11.5px;color:#fff;transform:scaleX(1.0870);">500</div>
<div class="t" style="left:637px;top:443.27px;font-size:11.5px;color:#fff;transform:scaleX(1.0952);">Validade vencida</div>
<div style="left:524px;top:474px;width:99px;height:51px;background:#f04530;"></div>
<div style="left:624px;top:474px;width:202px;height:51px;background:#f04530;"></div>
<div class="t" style="left:64px;top:494.27px;font-size:11.5px;color:#000;transform:scaleX(1.0870);">3</div>
<div class="t" style="left:121.5px;top:494.27px;font-size:11.5px;color:#000;transform:scaleX(1.0870);">Produto 3 - 29/01/2019</div>
<div class="t" style="left:391.25px;top:494.27px;font-size:11.5px;color:#000;transform:scaleX(1.0870);">600</div>
<div class="t" style="left:463.9px;top:494.27px;font-size:11.5px;color:#000;transform:scaleX(1.0870);">10</div>
<div class="t" style="left:537px;top:494.27px;font-size:11.5px;color:#fff;transform:scaleX(1.0870);">590</div>
<div class="t" style="left:637px;top:494.27px;font-size:11.5px;color:#fff;transform:scaleX(1.0952);">Validade vencida</div>
<div style="left:524px;top:525px;width:99px;height:51px;background:#f04530;"></div>
<div style="left:624px;top:525px;width:202px;height:51px;background:#f04530;"></div>
<div class="t" style="left:64px;top:545.27px;font-size:11.5px;color:#000;transform:scaleX(1.0870);">4</div>
<div class="t" style="left:121.5px;top:545.27px;font-size:11.5px;color:#000;transform:scaleX(1.0870);">Produto 2 - 30/01/2019</div>
<div class="t" style="left:391.25px;top:545.27px;font-size:11.5px;color:#000;transform:scaleX(1.0870);">600</div>
<div class="t" style="left:463.9px;top:545.27px;font-size:11.5px;color:#000;transform:scaleX(1.0870);">500</div>
<div class="t" style="left:537px;top:545.27px;font-size:11.5px;color:#fff;transform:scaleX(1.0870);">100</div>
<div class="t" style="left:637px;top:545.27px;font-size:11.5px;color:#fff;transform:scaleX(1.0952);">Validade vencida</div>
<div style="left:524px;top:576px;width:99px;height:51px;background:#ffc000;"></div>
<div style="left:624px;top:576px;width:202px;height:51px;background:#ffc000;"></div>
<div class="t" style="left:64px;top:596.27px;font-size:11.5px;color:#000;transform:scaleX(1.0870);">5</div>
<div class="t" style="left:121.5px;top:596.27px;font-size:11.5px;color:#000;transform:scaleX(1.0870);">Produto 4 - 27/02/2019</div>
<div class="t" style="left:391.25px;top:596.27px;font-size:11.5px;color:#000;transform:scaleX(1.0870);">600</div>
<div class="t" style="left:463.9px;top:596.27px;font-size:11.5px;color:#000;transform:scaleX(1.0870);">0</div>
<div class="t" style="left:537px;top:596.27px;font-size:11.5px;color:#fff;transform:scaleX(1.0870);">600</div>
<div class="t" style="left:637px;top:596.27px;font-size:11.5px;color:#fff;transform:scaleX(1.0282);">Vence em 28 dias</div>
<div style="left:524px;top:627px;width:99px;height:51px;background:#55ad3d;"></div>
<div style="left:624px;top:627px;width:202px;height:51px;background:#55ad3d;"></div>
<div class="t" style="left:64px;top:647.27px;font-size:11.5px;color:#000;transform:scaleX(1.0870);">6</div>
<div class="t" style="left:121.5px;top:647.27px;font-size:11.5px;color:#000;transform:scaleX(1.0870);">Produto 5 - 01/06/2019</div>
<div class="t" style="left:391.25px;top:647.27px;font-size:11.5px;color:#000;transform:scaleX(1.0870);">600</div>
<div class="t" style="left:463.9px;top:647.27px;font-size:11.5px;color:#000;transform:scaleX(1.0870);">100</div>
<div class="t" style="left:537px;top:647.27px;font-size:11.5px;color:#fff;transform:scaleX(1.0870);">500</div>
<div class="t" style="left:637px;top:647.27px;font-size:11.5px;color:#fff;transform:scaleX(1.0325);">Vence em 122 dias</div>
<div style="left:50px;top:372px;width:1px;height:306px;background:#d9d9d9;"></div>
<div style="left:107px;top:372px;width:1px;height:306px;background:#d9d9d9;"></div>
<div style="left:377px;top:372px;width:1px;height:306px;background:#d9d9d9;"></div>
<div style="left:450px;top:372px;width:1px;height:306px;background:#d9d9d9;"></div>
<div style="left:523px;top:372px;width:1px;height:306px;background:#d9d9d9;"></div>
<div style="left:623px;top:372px;width:1px;height:306px;background:#d9d9d9;"></div>
<div style="left:826px;top:372px;width:1px;height:306px;background:#d9d9d9;"></div>
<div style="left:51px;top:422px;width:775px;height:1px;background:#d9d9d9;"></div>
<div style="left:51px;top:473px;width:775px;height:1px;background:#d9d9d9;"></div>
<div style="left:51px;top:524px;width:775px;height:1px;background:#d9d9d9;"></div>
<div style="left:51px;top:575px;width:775px;height:1px;background:#d9d9d9;"></div>
<div style="left:51px;top:626px;width:775px;height:1px;background:#d9d9d9;"></div>
<div style="left:0px;top:717px;width:1344px;height:28px;background:#e6e6e6;"></div>
<div style="left:0px;top:717px;width:1366px;height:1px;background:#a0a0a0;"></div>
<div style="left:1344px;top:717px;width:22px;height:28px;background:#e6e6e6;"></div>
<svg style="position:absolute;left:24px;top:724px;" width="12" height="14" viewBox="0 0 12 14"><path d="M7.5 3.5V10.5L3.5 7Z" fill="#217346"/></svg>
<svg style="position:absolute;left:52px;top:724px;" width="12" height="14" viewBox="0 0 12 14"><path d="M4.5 3.5V10.5L8.5 7Z" fill="#217346"/></svg>
<div style="left:81px;top:732.5px;width:2.2px;height:2.2px;background:#145c2e;"></div>
<div style="left:85.2px;top:732.5px;width:2.2px;height:2.2px;background:#145c2e;"></div>
<div style="left:89.4px;top:732.5px;width:2.2px;height:2.2px;background:#145c2e;"></div>
<div style="left:192px;top:717px;width:93px;height:25px;background:#fff;box-sizing:border-box;border:1px solid #a0a0a0;border-top:none;border-bottom:none;"></div>
<div style="left:192px;top:740px;width:93px;height:2px;background:#217346;"></div>
<div class="t" style="left:204.3px;top:724.00px;font-size:13px;color:#217346;font-weight:bold;transform:scaleX(0.9279);">INVE_PRAZ</div>
<div class="t" style="left:113px;top:724.00px;font-size:13px;color:#444;transform:scaleX(0.8668);">INVE_GERA</div>
<div class="t" style="left:297px;top:724.00px;font-size:13px;color:#444;transform:scaleX(0.8840);">INVE_CENT</div>
<div class="t" style="left:389px;top:724.00px;font-size:13px;color:#444;transform:scaleX(0.8419);">RELA_GERA</div>
<div class="t" style="left:483px;top:724.00px;font-size:13px;color:#444;transform:scaleX(0.8834);">RELA_ANA</div>
<div class="t" style="left:571.2px;top:724.00px;font-size:13px;color:#444;transform:scaleX(0.8829);">DASH_BOAR</div>
<div class="t" style="left:672.4px;top:724.00px;font-size:13px;color:#444;transform:scaleX(0.8969);">DASH_INDI</div>
<div class="t" style="left:764.3px;top:724.00px;font-size:13px;color:#444;transform:scaleX(0.8494);">DASH_REPR</div>
<div class="t" style="left:860.8px;top:724.00px;font-size:13px;color:#444;transform:scaleX(0.8780);">DASH_PRAZ</div>
<div class="t" style="left:958px;top:724.00px;font-size:13px;color:#444;transform:scaleX(0.8545);">INST_PASS</div>
<div style="left:100px;top:722px;width:1px;height:19px;background:#a6a6a6;"></div>
<div style="left:376px;top:722px;width:1px;height:19px;background:#a6a6a6;"></div>
<div style="left:470px;top:722px;width:1px;height:19px;background:#a6a6a6;"></div>
<div style="left:558px;top:722px;width:1px;height:19px;background:#a6a6a6;"></div>
<div style="left:657px;top:722px;width:1px;height:19px;background:#a6a6a6;"></div>
<div style="left:750px;top:722px;width:1px;height:19px;background:#a6a6a6;"></div>
<div style="left:846px;top:722px;width:1px;height:19px;background:#a6a6a6;"></div>
<div style="left:944px;top:722px;width:1px;height:19px;background:#a6a6a6;"></div>
<div style="left:1034px;top:722px;width:1px;height:19px;background:#a6a6a6;"></div>
<div style="left:1046px;top:732.5px;width:2px;height:2px;background:#145c2e;"></div>
<div style="left:1050px;top:732.5px;width:2px;height:2px;background:#145c2e;"></div>
<div style="left:1054px;top:732.5px;width:2px;height:2px;background:#145c2e;"></div>
<svg style="position:absolute;left:1069px;top:721px;" width="18" height="20" viewBox="0 0 18 20"><circle cx="9" cy="9.7" r="7.6" fill="none" stroke="#777" stroke-width="1.2"/><path d="M9 5.8V13.6M5.1 9.7H12.9" stroke="#777" stroke-width="2"/></svg>
<div style="left:1106px;top:726px;width:2px;height:2px;background:#b4b4b4;"></div>
<div style="left:1106px;top:730px;width:2px;height:2px;background:#b4b4b4;"></div>
<div style="left:1106px;top:734px;width:2px;height:2px;background:#b4b4b4;"></div>
<div style="left:1123px;top:724px;width:221px;height:15px;background:#dcdcdc;"></div>
<div style="left:1123px;top:724px;width:15px;height:15px;background:#fff;box-sizing:border-box;border:1px solid #ababab;"></div>
<svg style="position:absolute;left:1123px;top:724px;" width="15" height="15" viewBox="0 0 15 15"><path d="M9.5 4V11L5.5 7.5z" fill="#777"/></svg>
<div style="left:1137px;top:724px;width:148px;height:15px;background:#fff;box-sizing:border-box;border:1px solid #ababab;"></div>
<div style="left:1329px;top:724px;width:15px;height:15px;background:#fff;box-sizing:border-box;border:1px solid #ababab;"></div>
<svg style="position:absolute;left:1329px;top:724px;" width="15" height="15" viewBox="0 0 15 15"><path d="M5.5 4V11L9.5 7.5z" fill="#777"/></svg>
<div style="left:0px;top:745px;width:1366px;height:21px;background:#f3f2f1;"></div>
<div style="left:0px;top:745px;width:1366px;height:1px;background:#dadada;"></div>
<svg style="position:absolute;left:7px;top:748px;" width="16" height="16" viewBox="0 0 16 16"><circle cx="4.5" cy="4" r="2.8" fill="#444"/><path d="M8 2.5H14.5V13.5H2.5V8" fill="none" stroke="#444"/><path d="M2.5 8H14.5M2.5 10.8H14.5M6 8V13.5M9 8V13.5M12 8V13.5" stroke="#444" stroke-width="0.9"/></svg>
<div style="left:1086px;top:746px;width:38px;height:20px;background:#c8c8c8;"></div>
<svg style="position:absolute;left:1090px;top:744px;" width="110" height="22" viewBox="0 0 110 22"><g fill="none" stroke="#666" stroke-width="1.2"><rect x="8.5" y="5.5" width="12" height="12"/><path d="M12.5 5.5V17.5M16.5 5.5V17.5M8.5 9.5H20.5M8.5 13.5H20.5"/><rect x="46.5" y="5.5" width="13" height="12"/><rect x="49.5" y="7.5" width="7" height="8"/><path d="M51 9.7H55M51 11.5H55M51 13.3H55"/><rect x="84.5" y="5.5" width="13" height="12"/><path d="M88.5 5.5V12.5M92.5 5.5V12.5H84.5"/></g></svg>
<div style="left:1205px;top:756px;width:7px;height:2px;background:#444;"></div>
<div style="left:1215px;top:756px;width:100px;height:1px;background:#a0a0a0;"></div>
<div style="left:1258px;top:750px;width:5px;height:11px;background:#666;"></div>
<div style="left:1265px;top:753px;width:1px;height:6px;background:#a0a0a0;"></div>
<div style="left:1318px;top:756px;width:8px;height:2px;background:#444;"></div>
<div style="left:1321px;top:753px;width:2px;height:8px;background:#444;"></div>
<div class="t" style="left:1337px;top:749.34px;font-size:12px;color:#444;transform:scaleX(0.8744);">90%</div>
<div style="left:0px;top:765px;width:1366px;height:1px;background:#fbfbfb;"></div>
<div style="left:0px;top:766px;width:1366px;height:2px;background:#2a2a2a;"></div>
<div style="left:48px;top:766px;width:344px;height:1px;background:#bcbcbc;"></div>
<div style="left:48px;top:767px;width:344px;height:1px;background:#f5f5f5;"></div>
<div style="left:689px;top:766px;width:48px;height:2px;background:#5a5a5a;"></div>
<div style="left:1344px;top:226px;width:1px;height:491px;background:#a0a0a0;"></div>
</body></html>
